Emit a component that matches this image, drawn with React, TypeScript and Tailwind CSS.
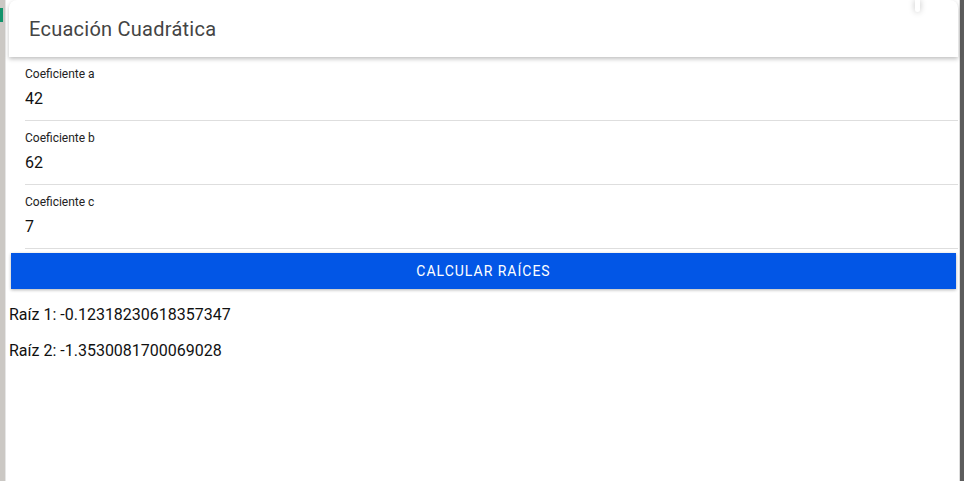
import { useState } from "react";

const campos = [
  { label: "Coeficiente a", value: "42" },
  { label: "Coeficiente b", value: "62" },
  { label: "Coeficiente c", value: "7" },
];

export default function App() {
  const [valores] = useState(campos);

  return (
    <div className="flex h-[481px] w-[964px] overflow-hidden bg-white font-['Roboto',sans-serif]">
      {/* left window edge */}
      <div className="flex w-[5px] flex-col bg-[#cbc8c4]">
        <div className="mt-[8px] h-[14px] w-[3px] bg-[#12936b]" />
      </div>
      <div className="w-px bg-[#e6e6e6]" />

      {/* page */}
      <div className="flex flex-1 flex-col pl-[3px] pr-px">
        {/* toolbar */}
        <header className="relative flex h-[57px] items-center rounded-t-lg bg-white px-5 shadow-[0_2px_4px_rgba(0,0,0,0.25)]">
          <h1 className="pt-px text-[20px] tracking-[0.25px] text-[#444]">Ecuación Cuadrática</h1>
          <div className="absolute right-[38px] top-0 h-[12px] w-[5px] rounded-b bg-white shadow-[0_0_6px_rgba(0,0,0,0.25)]" />
        </header>

        {/* inputs */}
        <div className="pl-[16px]">
          {valores.map((c) => (
            <div key={c.label} className="flex h-[64px] flex-col border-b border-[#dedede] pt-[7px]">
              <label className="text-[12px] leading-[20px] text-[#222]">{c.label}</label>
              <input
                readOnly
                value={c.value}
                className="mt-[4px] bg-transparent text-[16px] leading-[22px] text-[#111] outline-none"
              />
            </div>
          ))}
        </div>

        <button className="mx-[2px] mt-[4px] h-[36px] bg-[#0256e6] text-[14px] tracking-[1px] text-white shadow-[0_1px_3px_rgba(0,0,0,0.3)]">
          CALCULAR RAÍCES
        </button>

        <div className="mt-[15px] flex flex-col gap-[14px] text-[16px] leading-[22px] text-[#111]">
          <p>Raíz 1: -0.12318230618357347</p>
          <p>Raíz 2: -1.3530081700069028</p>
        </div>
      </div>

      {/* right window edge */}
      <div className="w-px bg-[#dcdcdc]" />
      <div className="w-[4px] bg-[#5c5c5c]" />
    </div>
  );
}
